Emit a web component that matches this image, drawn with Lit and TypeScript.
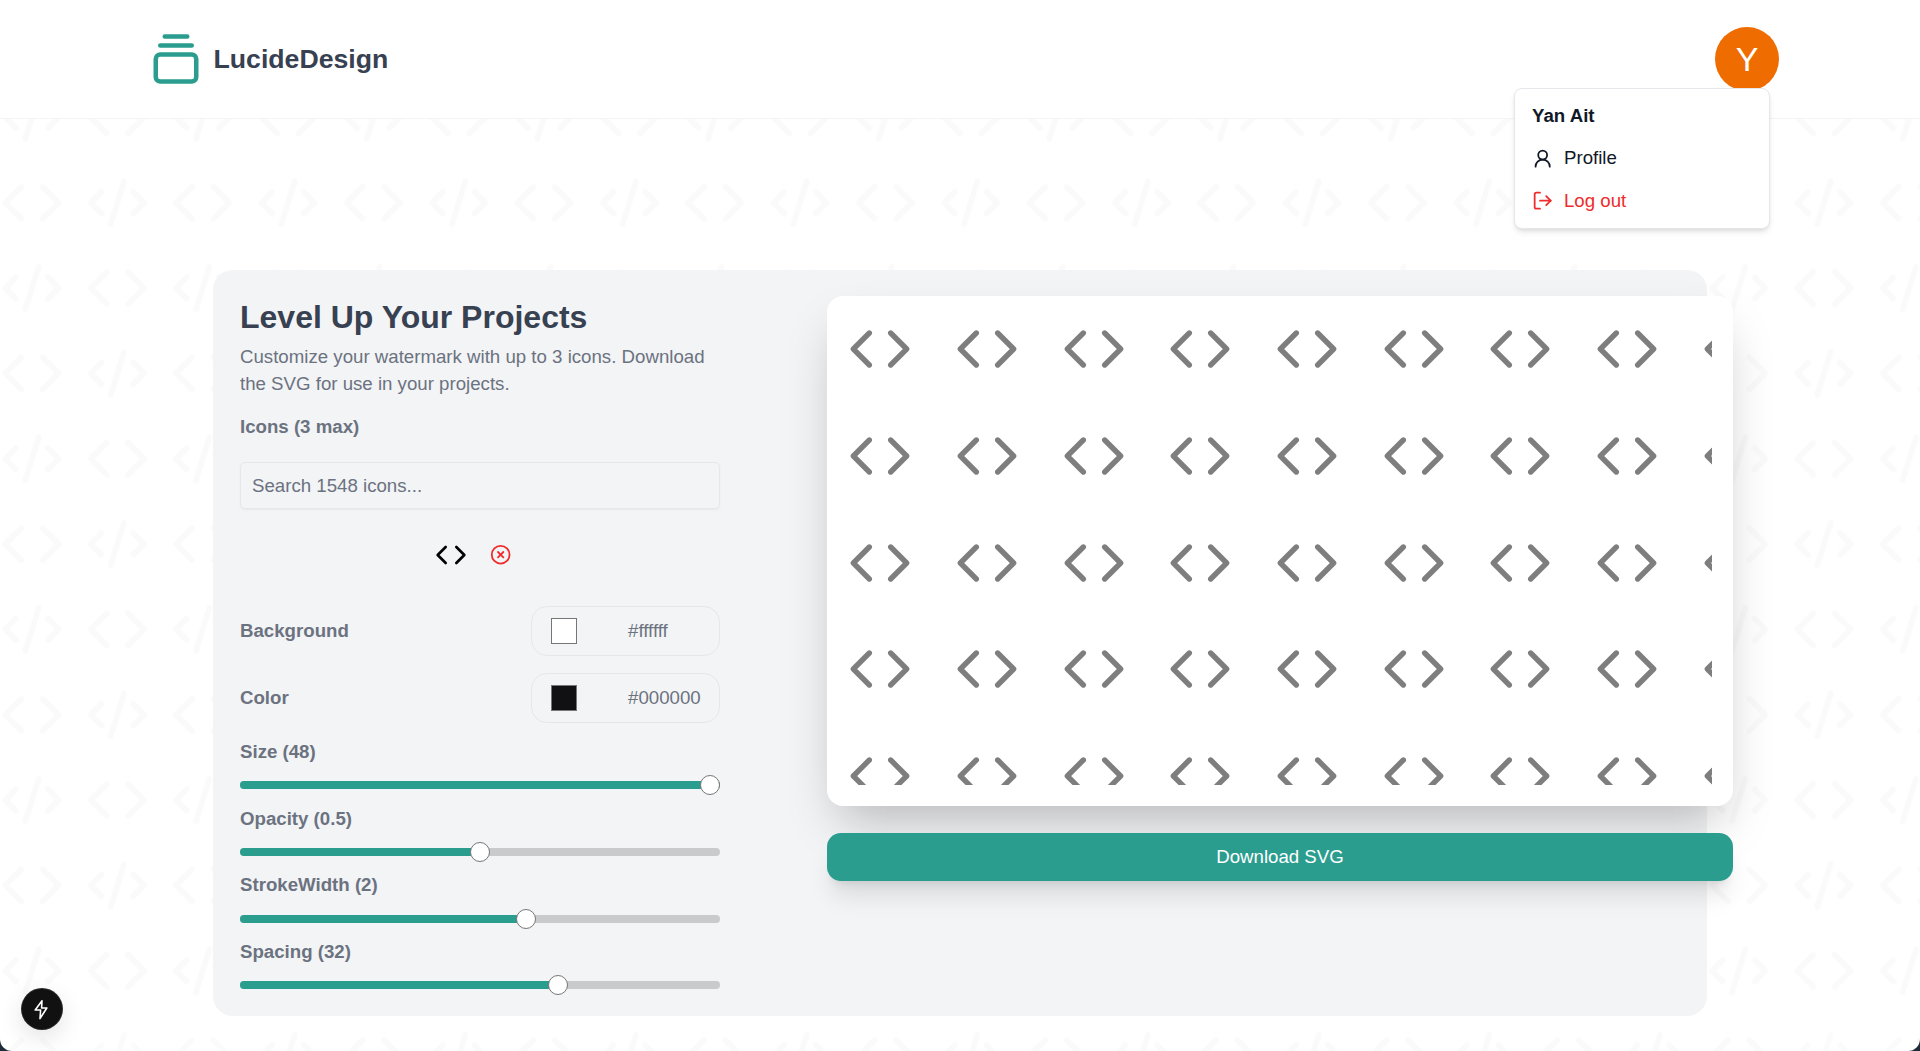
import { LitElement, html, css, svg } from 'lit';
import { customElement } from 'lit/decorators.js';

// lucide paths, used at a few different sizes
const codeIcon = svg`<polyline points="16 18 22 12 16 6"></polyline><polyline points="8 6 2 12 8 18"></polyline>`;
const codeXmlIcon = svg`<path d="m18 16 4-4-4-4"></path><path d="m6 8-4 4 4 4"></path><path d="m14.5 4-5 16"></path>`;

const icon = (body: unknown, cls: string) => html`
  <svg class=${cls} viewBox="0 0 24 24" fill="none" stroke="currentColor" stroke-width="2"
    stroke-linecap="round" stroke-linejoin="round">${body}</svg>`;

const sliders = [
  { label: 'Size (48)', pct: 100 },
  { label: 'Opacity (0.5)', pct: 50 },
  { label: 'StrokeWidth (2)', pct: 60 },
  { label: 'Spacing (32)', pct: 67 },
];

const colors = [
  { label: 'Background', value: '#ffffff', swatch: '#ffffff' },
  { label: 'Color', value: '#000000', swatch: '#111114' },
];

const TILE = 170.667;

@customElement('app-root')
export class AppRoot extends LitElement {
  static styles = css`
    :host {
      display: block;
      height: 1051px;
      background: #1f2b3a;
      font-family: "Liberation Sans", Arial, sans-serif;
      font-size: 18.67px;
      color: #111827;
    }
    .page {
      position: relative;
      height: 1051px;
      overflow: hidden;
      background: #fff;
      border-radius: 0 0 12px 12px;
    }
    .backdrop {
      position: absolute;
      inset: 0;
      width: 100%;
      height: 100%;
      color: #000;
      opacity: 0.014;
    }
    header {
      position: relative;
      height: 118px;
      border-bottom: 1px solid #f3f4f6;
      background: #fff;
      display: flex;
      align-items: center;
      justify-content: space-between;
      padding: 0 141px 0 149px;
    }
    .brand {
      display: flex;
      align-items: center;
      gap: 10.5px;
      color: #2a9d8f;
    }
    .brand-icon { width: 54px; height: 54px; }
    .brand-name {
      font-size: 26.67px;
      font-weight: 700;
      color: #374151;
    }
    .avatar {
      width: 64px;
      height: 64px;
      border-radius: 50%;
      background: #ef6c00;
      color: #fff;
      font-size: 34px;
      display: flex;
      align-items: center;
      justify-content: center;
    }
    .menu {
      position: absolute;
      left: 1514px;
      top: 88px;
      width: 256px;
      height: 141px;
      box-sizing: border-box;
      padding: 5px 0;
      background: #fff;
      border: 1px solid #e5e7eb;
      border-radius: 8px;
      box-shadow: 0 4px 6px -1px rgba(0,0,0,.1), 0 2px 4px -2px rgba(0,0,0,.1);
      z-index: 3;
    }
    .menu-name {
      font-weight: 700;
      height: 43px;
      line-height: 43px;
      padding-left: 17px;
      color: #111827;
    }
    .menu-item {
      height: 42.5px;
      display: flex;
      align-items: center;
      gap: 10.67px;
      padding-left: 17px;
      color: #111827;
    }
    .menu-item.danger { color: #ef2b2b; }
    .menu-icon { width: 21.33px; height: 21.33px; }
    main {
      position: relative;
      display: flex;
      justify-content: center;
      padding-top: 151px;
    }
    .card {
      width: 1494px;
      height: 746px;
      box-sizing: border-box;
      padding: 26px 27px;
      background: #f3f4f6;
      border-radius: 20px;
      display: flex;
      gap: 107px;
    }
    .controls {
      flex: none;
      width: 480px;
    }
    h1 {
      margin: 0;
      font-size: 32px;
      line-height: 43px;
      font-weight: 700;
      color: #374151;
    }
    .intro {
      margin: 5px 0 0;
      line-height: 26.67px;
      color: #6b7280;
    }
    .label {
      font-weight: 700;
      color: #6b7280;
    }
    .icons-label { margin-top: 16.5px; line-height: 26.67px; }
    .search {
      margin-top: 21.8px;
      height: 46.67px;
      box-sizing: border-box;
      border: 1px solid #e5e7eb;
      border-radius: 5px;
      box-shadow: 0 1px 2px rgba(0,0,0,.05);
      padding: 0 11px;
      display: flex;
      align-items: center;
      color: #6b7280;
    }
    .selected {
      margin-top: 30px;
      height: 32px;
      padding-right: 13px;
      display: flex;
      align-items: center;
      justify-content: center;
      gap: 23.3px;
      color: #000;
    }
    .selected-icon { width: 32px; height: 32px; }
    .remove-icon { width: 21.33px; height: 21.33px; color: #ef2b2b; }
    .colors { margin-top: 35px; }
    .color-row {
      display: flex;
      align-items: center;
      justify-content: space-between;
      height: 50px;
      margin-bottom: 16.67px;
    }
    .color-pill {
      width: 189px;
      height: 50px;
      box-sizing: border-box;
      border: 1px solid #e5e7eb;
      border-radius: 16px;
      display: flex;
      align-items: center;
      padding-left: 19px;
      color: #6b7280;
    }
    .swatch {
      flex: none;
      width: 26px;
      height: 26px;
      box-sizing: border-box;
      border: 1px solid #767676;
      margin-right: 51px;
    }
    .sliders { margin-top: -0.3px; }
    .slider { height: 66.67px; }
    .slider-label { line-height: 26.67px; height: 26.67px; }
    .track {
      position: relative;
      margin-top: 15.6px;
      height: 8px;
      border-radius: 4px;
      background: #c8cacc;
    }
    .fill {
      height: 8px;
      border-radius: 4px;
      background: #2a9d8f;
    }
    .thumb {
      position: absolute;
      top: -6px;
      width: 20px;
      height: 20px;
      box-sizing: border-box;
      margin-left: -10px;
      border-radius: 50%;
      background: #fff;
      border: 1px solid #767676;
    }
    .output {
      flex: none;
      width: 906px;
      display: flex;
      flex-direction: column;
      gap: 27px;
    }
    .preview {
      height: 510px;
      box-sizing: border-box;
      padding: 21.33px;
      background: #fff;
      border-radius: 16px;
      box-shadow: 0 25px 50px -12px rgba(0,0,0,.25);
    }
    .preview-grid {
      height: 100%;
      overflow: hidden;
      display: grid;
      grid-template-columns: repeat(9, 64px);
      grid-auto-rows: 64px;
      gap: 42.67px;
      color: #000;
    }
    .preview-icon { width: 64px; height: 64px; opacity: .5; }
    .download {
      height: 48px;
      border-radius: 14px;
      background: #2a9d8f;
      color: #fff;
      display: flex;
      align-items: center;
      justify-content: center;
      box-shadow: 0 20px 25px -5px rgba(0,0,0,.1), 0 8px 10px -6px rgba(0,0,0,.1);
    }
    .dev-badge {
      position: absolute;
      left: 22px;
      top: 989px;
      width: 40px;
      height: 40px;
      border-radius: 50%;
      background: #111;
      color: #fff;
      display: flex;
      align-items: center;
      justify-content: center;
      box-shadow: 0 0 0 1px #2a2a2a, 0 8px 24px rgba(0,0,0,.12);
    }
    .dev-icon { width: 24px; height: 24px; stroke-width: 1.6; }
  `;

  render() {
    return html`
      <div class="page">
        <svg class="backdrop" aria-hidden="true">
          <defs>
            <pattern id="tile" width=${TILE} height=${TILE} patternUnits="userSpaceOnUse">
              <g fill="none" stroke="currentColor" stroke-width="2" stroke-linecap="round" stroke-linejoin="round">
                <g transform="scale(2.6667)">${codeIcon}</g>
                <g transform="translate(85.333 0) scale(2.6667)">${codeXmlIcon}</g>
                <g transform="translate(0 85.333) scale(2.6667)">${codeXmlIcon}</g>
                <g transform="translate(85.333 85.333) scale(2.6667)">${codeIcon}</g>
              </g>
            </pattern>
          </defs>
          <rect width="100%" height="100%" fill="url(#tile)"></rect>
        </svg>

        <header>
          <div class="brand">
            ${icon(svg`<path d="M7 2h10"></path><path d="M5 6h14"></path><rect width="18" height="12" x="3" y="10" rx="2"></rect>`, 'brand-icon')}
            <span class="brand-name">LucideDesign</span>
          </div>
          <div class="avatar">Y</div>
        </header>

        <div class="menu">
          <div class="menu-name">Yan Ait</div>
          <div class="menu-item">
            ${icon(svg`<circle cx="12" cy="8" r="5"></circle><path d="M20 21a8 8 0 0 0-16 0"></path>`, 'menu-icon')}
            Profile
          </div>
          <div class="menu-item danger">
            ${icon(svg`<path d="M9 21H5a2 2 0 0 1-2-2V5a2 2 0 0 1 2-2h4"></path><polyline points="16 17 21 12 16 7"></polyline><line x1="21" x2="9" y1="12" y2="12"></line>`, 'menu-icon')}
            Log out
          </div>
        </div>

        <main>
          <section class="card">
            <div class="controls">
              <h1>Level Up Your Projects</h1>
              <p class="intro">Customize your watermark with up to 3 icons. Download the SVG for use in your projects.</p>
              <div class="label icons-label">Icons (3 max)</div>
              <div class="search">Search 1548 icons...</div>
              <div class="selected">
                ${icon(codeIcon, 'selected-icon')}
                ${icon(svg`<circle cx="12" cy="12" r="10"></circle><path d="m15 9-6 6"></path><path d="m9 9 6 6"></path>`, 'remove-icon')}
              </div>
              <div class="colors">
                ${colors.map(c => html`
                  <div class="color-row">
                    <span class="label">${c.label}</span>
                    <div class="color-pill">
                      <span class="swatch" style="background:${c.swatch}"></span>${c.value}
                    </div>
                  </div>`)}
              </div>
              <div class="sliders">
                ${sliders.map(s => html`
                  <div class="slider">
                    <div class="label slider-label">${s.label}</div>
                    <div class="track">
                      <div class="fill" style="width:${s.pct}%"></div>
                      <div class="thumb" style="left:calc(10px + (100% - 20px) * ${s.pct / 100})"></div>
                    </div>
                  </div>`)}
              </div>
            </div>

            <div class="output">
              <div class="preview">
                <div class="preview-grid">
                  ${Array.from({ length: 45 }, () => icon(codeIcon, 'preview-icon'))}
                </div>
              </div>
              <div class="download">Download SVG</div>
            </div>
          </section>
        </main>

        <div class="dev-badge">
          ${icon(svg`<polygon points="12 3.8 5.2 13 10.6 13 10 21.6 16.8 11 11.6 11"></polygon>`, 'dev-icon')}
        </div>
      </div>
    `;
  }
}
